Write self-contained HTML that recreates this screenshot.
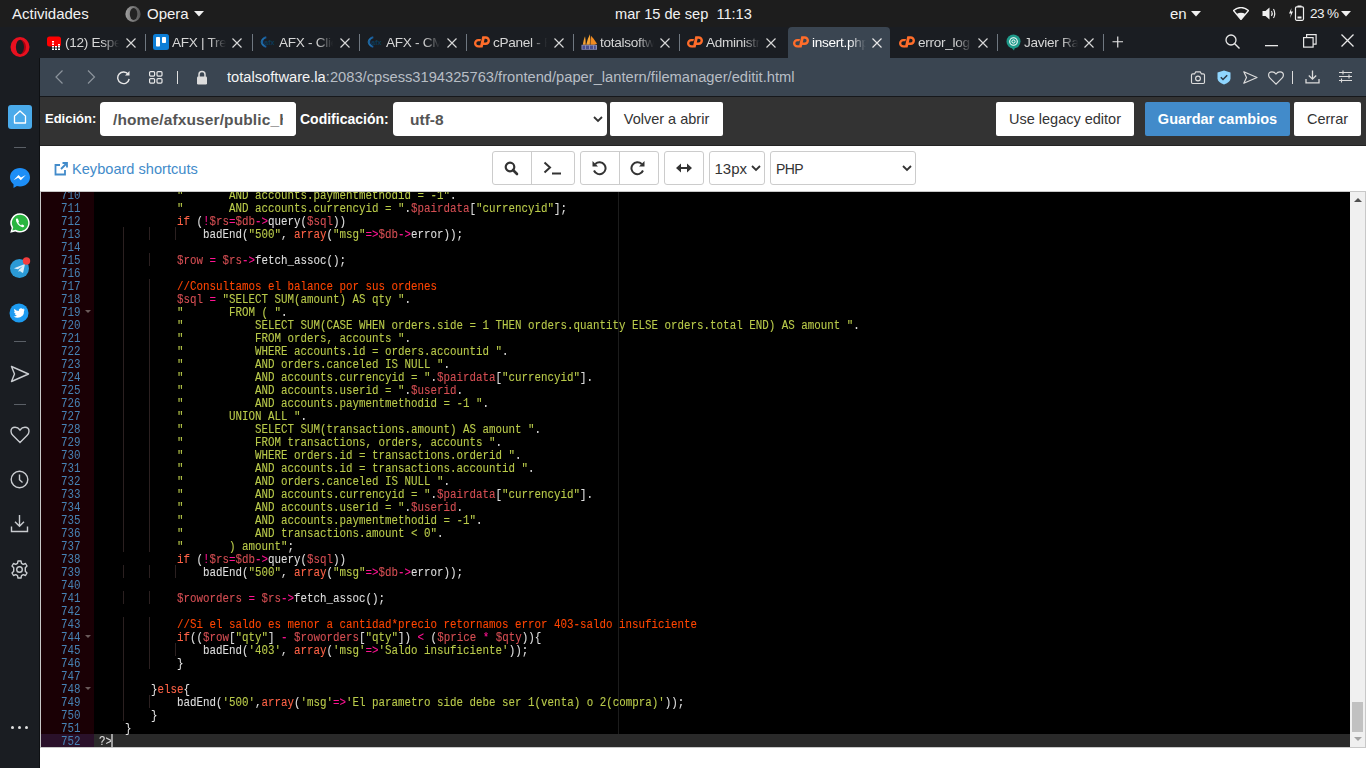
<!DOCTYPE html>
<html><head><meta charset="utf-8">
<style>
*{box-sizing:border-box}
html,body{margin:0;padding:0;width:1366px;height:768px;overflow:hidden;background:#fff;font-family:"Liberation Sans",sans-serif}
.a{position:absolute}
#topbar{position:absolute;left:0;top:0;width:1366px;height:27px;background:#1d1d1d;color:#f0f0f0;font-size:15px}
#tabstrip{position:absolute;left:0;top:27px;width:1366px;height:31px;background:#1a1d22}
#sidebar{position:absolute;left:0;top:58px;width:40px;height:710px;background:#1a1d22;border-right:1px solid #0e1013}
#addr{position:absolute;left:40px;top:58px;width:1326px;height:38px;background:#3a4551}
#addrline{position:absolute;left:40px;top:96px;width:1326px;height:1px;background:#16181b}
#cphead{position:absolute;left:40px;top:97px;width:1326px;height:49px;background:#333;border-bottom:1px solid #232323}
.tab{position:absolute;top:27px;height:31px;color:#d6d6d6;font-size:13.6px;white-space:nowrap}
.tab .ic{position:absolute;left:0;top:8px;width:16px;height:16px}
.tab .tt{position:absolute;left:19px;top:7px;height:20px;line-height:18px;overflow:hidden;letter-spacing:-0.3px;-webkit-mask-image:linear-gradient(90deg,#000 0,#000 70%,transparent 100%)}
.tab .fade{position:absolute;top:6px;height:20px;width:14px}
.tab .x{position:absolute;top:10px;width:11px;height:11px}
.sep{position:absolute;top:34px;width:1px;height:17px;background:#6f7780}
.topt{position:absolute;top:5px;line-height:18px;font-size:15px;color:#f2f2f2;white-space:nowrap}
/* cpanel */
.lbl{position:absolute;top:109px;color:#fff;font-weight:bold;font-size:14.5px;line-height:18px;white-space:nowrap}
.inp{position:absolute;top:102px;height:34px;background:#fff;border-radius:4px}
.btn{position:absolute;height:34px;background:#fff;border-radius:2px;color:#333;font-size:14.5px;line-height:34px;text-align:center;white-space:nowrap}
.tb{position:absolute;top:151px;height:34px;border:1px solid #ccc;background:#fff;border-radius:3px}
/* editor */
#edframe{position:absolute;left:40px;top:191px;width:1326px;height:557px;border:1px solid #c8c8c8;background:#000}
#editor{position:absolute;left:41px;top:192px;width:1324px;height:555px;overflow:hidden;background:#000}
#gutter{position:absolute;left:0;top:0;width:53px;height:555px;background:#1a0005;overflow:hidden}
.gl{position:absolute;left:0;width:53px;height:13px}
.gl span{position:absolute;right:13.7px;top:2px}
.ga{background:#2a112a}
.mono{font-family:"Liberation Mono",monospace;font-size:12px;line-height:13px}
#gutter .gl span{font-family:"Liberation Mono",monospace;font-size:12px;line-height:13px;color:#4682b4;transform:scaleX(0.9028);transform-origin:right top;white-space:pre}
.fold{position:absolute;left:44px;width:0;height:0;border-left:3px solid transparent;border-right:3px solid transparent;border-top:3px solid #6a5a5a}
#pm{position:absolute;left:577px;top:0;width:1px;height:555px;background:#1c1c1c}
#actline{position:absolute;left:53px;width:1256px;height:13px;background:#2a2a2a}
.ig{position:absolute;width:1px;height:13px;background:#2b2020}
#codewrap{position:absolute;left:57.6px;top:2px;width:1300px;height:555px}
#code{position:absolute;left:0;top:0;width:1500px;height:555px;transform:scaleX(0.9028);transform-origin:left top}
.ln{position:absolute;left:0;height:13px;white-space:pre;font-family:"Liberation Mono",monospace;font-size:12px;line-height:13px;color:#dedede}
.ln i{font-style:normal}
.ln{-webkit-text-stroke:0.1px currentColor}
.cm{color:#ff4500}.st{color:#b9ca4a}.va{color:#d54e53}.kw{color:#ff6347}.op{color:#ff1493}
#cursor{position:absolute;left:70px;width:2px;height:13px;background:#9f9f9f}
#vscroll{position:absolute;left:1309px;top:0;width:15px;height:555px;background:#f0f0f0}
#sup{position:absolute;left:3.5px;top:5.5px;width:0;height:0;border-left:4px solid transparent;border-right:4px solid transparent;border-bottom:4.2px solid #505050}
#sdn{position:absolute;left:3.5px;top:545px;width:0;height:0;border-left:4px solid transparent;border-right:4px solid transparent;border-top:4.2px solid #a3a3a3}
#thumb{position:absolute;left:2px;top:510px;width:11px;height:30px;background:#c1c1c1}
</style></head><body>
<div id="topbar">
 <div class="topt" style="left:12px">Actividades</div>
 <svg class="a" style="left:125px;top:6px" width="16" height="16" viewBox="0 0 16 16"><defs><linearGradient id="og" x1="0" x2="1"><stop offset="0" stop-color="#a0a0a0"/><stop offset="1" stop-color="#555"/></linearGradient></defs><ellipse cx="8" cy="8" rx="7.6" ry="7.9" fill="url(#og)"/><ellipse cx="8.6" cy="8" rx="3.8" ry="5.9" fill="#232323"/></svg>
 <div class="topt" style="left:147px">Opera</div>
 <svg class="a" style="left:194px;top:11px" width="10" height="6"><path d="M0 0H10L5 5.5Z" fill="#f0f0f0"/></svg>
 <div class="topt" style="left:615px;font-size:14.6px">mar 15 de sep&nbsp;&nbsp;11:13</div>
 <div class="topt" style="left:1170px">en</div>
 <svg class="a" style="left:1191px;top:11px" width="10" height="6"><path d="M0 0H10L5 5.5Z" fill="#f0f0f0"/></svg>
 <svg class="a" style="left:1233px;top:7px" width="16" height="13" viewBox="0 0 16 13"><path d="M8 12.5L0.5 3.5Q8 -2.5 15.5 3.5Z" fill="none" stroke="#f0f0f0" stroke-width="1.3"/><path d="M8 12.5L3.5 7Q8 4.5 12.5 7Z" fill="#f0f0f0"/></svg>
 <svg class="a" style="left:1262px;top:7px" width="15" height="13" viewBox="0 0 15 13"><path d="M0.5 4H3.5L7.5 0.5V12.5L3.5 9H0.5Z" fill="#f0f0f0"/><path d="M9.5 4Q11 6.5 9.5 9M11.5 2Q14 6.5 11.5 11" fill="none" stroke="#f0f0f0" stroke-width="1.1"/></svg>
 <svg class="a" style="left:1288px;top:5px" width="18" height="16" viewBox="0 0 18 16"><path d="M3.5 3L1 8.5H3L2 13L5 6.5H3Z" fill="#f0f0f0"/><rect x="7.5" y="1.8" width="8" height="13.5" rx="1.2" fill="none" stroke="#f0f0f0" stroke-width="1.2"/><rect x="9.5" y="0.5" width="4" height="1.5" fill="#f0f0f0"/><rect x="9.5" y="11.5" width="4" height="2" fill="#f0f0f0"/></svg>
 <div class="topt" style="left:1310px;font-size:13.5px;letter-spacing:-0.6px">23 %</div>
 <svg class="a" style="left:1341px;top:11px" width="10" height="6"><path d="M0 0H10L5 5.5Z" fill="#f0f0f0"/></svg>
</div>
<div id="tabstrip"></div>
<div id="sidebar"></div>
<div id="addr"></div>
<div id="addrline"></div>
<div id="cphead"></div>

<!-- opera logo -->
<svg class="a" style="left:10px;top:37px" width="20" height="20" viewBox="0 0 20 20"><ellipse cx="10" cy="10" rx="9.5" ry="10" fill="#e8101f"/><ellipse cx="10.3" cy="10" rx="4.4" ry="7.3" fill="#1a1d22"/><path d="M10.3 2.7Q16 4 16 10Q16 16 10.3 17.3Q14 15 14 10Q14 5 10.3 2.7Z" fill="#a8000f"/></svg>
<!-- tab 1 youtube -->
<svg class="a" style="left:47px;top:36px" width="16" height="16" viewBox="0 0 16 16"><rect x="0" y="0.5" width="14" height="10" rx="2.5" fill="#ff0000"/><g fill="#fff"><rect x="5" y="5" width="2" height="1.5"/><rect x="5" y="7.5" width="2" height="1.5"/><rect x="5" y="10" width="2" height="1.5"/><rect x="5" y="12.5" width="2" height="1.5"/><rect x="8" y="10" width="2" height="1.5"/><rect x="8" y="12.5" width="2" height="1.5"/><rect x="11" y="8" width="2" height="1.5"/><rect x="11" y="10" width="2" height="1.5"/><rect x="11" y="12.5" width="2" height="1.5"/></g></svg>
<div class="tab" style="left:65px"><div class="tt" style="left:0;width:54px">(12) Espe</div></div>
<svg class="a" style="left:126px;top:38px" width="10" height="10"><path d="M0.5 0.5L9.5 9.5M9.5 0.5L0.5 9.5" stroke="#d8d8d8" stroke-width="1.15"/></svg>
<div class="sep" style="left:145px"></div>
<!-- tab 2 trello -->
<svg class="a" style="left:153px;top:34px" width="16" height="16" viewBox="0 0 16 16"><rect x="0" y="0" width="16" height="16" rx="2.5" fill="#0c7ed6"/><rect x="3" y="3" width="4" height="9.5" rx="0.8" fill="#fff"/><rect x="9" y="3" width="4" height="6" rx="0.8" fill="#fff"/></svg>
<div class="tab" style="left:172px"><div class="tt" style="left:0;width:54px">AFX | Trello</div></div>
<svg class="a" style="left:232px;top:38px" width="10" height="10"><path d="M0.5 0.5L9.5 9.5M9.5 0.5L0.5 9.5" stroke="#d8d8d8" stroke-width="1.15"/></svg>
<div class="sep" style="left:252px"></div>
<!-- tab 3 -->
<svg class="a" style="left:260px;top:36px" width="17" height="12" viewBox="0 0 17 12"><path d="M6.3 1.2A5.2 4.9 0 0 0 6.3 10.8" fill="none" stroke="#1a5e9e" stroke-width="1.9"/><path d="M4.6 2.6A3.6 3.4 0 0 0 4.6 9.4" fill="none" stroke="#2a8ac0" stroke-width="0.8" opacity="0.7"/><text x="4.2" y="8.6" font-size="7.2" font-weight="bold" fill="#0b3a58" font-family="Liberation Sans">afx</text></svg>
<div class="tab" style="left:279px"><div class="tt" style="left:0;width:54px">AFX - Clientes</div></div>
<svg class="a" style="left:340px;top:38px" width="10" height="10"><path d="M0.5 0.5L9.5 9.5M9.5 0.5L0.5 9.5" stroke="#d8d8d8" stroke-width="1.15"/></svg>
<div class="sep" style="left:359px"></div>
<!-- tab 4 -->
<svg class="a" style="left:367px;top:36px" width="17" height="12" viewBox="0 0 17 12"><path d="M6.3 1.2A5.2 4.9 0 0 0 6.3 10.8" fill="none" stroke="#1a5e9e" stroke-width="1.9"/><path d="M4.6 2.6A3.6 3.4 0 0 0 4.6 9.4" fill="none" stroke="#2a8ac0" stroke-width="0.8" opacity="0.7"/><text x="4.2" y="8.6" font-size="7.2" font-weight="bold" fill="#0b3a58" font-family="Liberation Sans">afx</text></svg>
<div class="tab" style="left:386px"><div class="tt" style="left:0;width:54px">AFX - CMS</div></div>
<svg class="a" style="left:447px;top:38px" width="10" height="10"><path d="M0.5 0.5L9.5 9.5M9.5 0.5L0.5 9.5" stroke="#d8d8d8" stroke-width="1.15"/></svg>
<div class="sep" style="left:466px"></div>
<!-- tab 5 cpanel -->
<svg class="a" style="left:474px;top:36px" width="16" height="12" viewBox="0 0 16 12"><g fill="#ff6d2a"><path d="M7 3H4.3A4.3 4.3 0 0 0 4.3 11.6H6L6.6 9.3H4.3A2 2 0 0 1 4.3 5.3H6.4Z"/><path fill-rule="evenodd" d="M8.3 0.3H11.7A4.3 4.3 0 0 1 11.7 8.9H9.2L8.6 11.6H5.7Z M10.65 2.7H11.7A1.9 1.9 0 0 1 11.7 6.5H9.77Z"/></g></svg>
<div class="tab" style="left:493px"><div class="tt" style="left:0;width:54px">cPanel - File</div></div>
<svg class="a" style="left:554px;top:38px" width="10" height="10"><path d="M0.5 0.5L9.5 9.5M9.5 0.5L0.5 9.5" stroke="#d8d8d8" stroke-width="1.15"/></svg>
<div class="sep" style="left:573px"></div>
<!-- tab 6 totalsoft -->
<svg class="a" style="left:581px;top:34px" width="17" height="16" viewBox="0 0 17 16"><path d="M1.8 10.8Q2.6 5.5 4 2.3Q4.8 6 4.7 10.8Z" fill="#f5a030"/><path d="M5.2 10.8Q6.8 4 9 0.3Q9.3 5 8.8 10.8Z" fill="#f7a535"/><path d="M9.4 10.8Q9.4 5 10 1.8Q13.2 5 16 9.8L13.5 10.8Z" fill="#f08a20"/><rect x="0.5" y="10.8" width="15.5" height="5" fill="#8a8db4"/><g fill="#4a4f8e"><rect x="1.5" y="11.6" width="2.6" height="3.6"/><rect x="5" y="11.6" width="3" height="3.6"/><rect x="9" y="11.6" width="3" height="3.6"/><rect x="13" y="11.6" width="1.8" height="3.6"/></g></svg>
<div class="tab" style="left:600px"><div class="tt" style="left:0;width:54px">totalsoftware</div></div>
<svg class="a" style="left:660px;top:38px" width="10" height="10"><path d="M0.5 0.5L9.5 9.5M9.5 0.5L0.5 9.5" stroke="#d8d8d8" stroke-width="1.15"/></svg>
<div class="sep" style="left:679px"></div>
<!-- tab 7 cpanel admin -->
<svg class="a" style="left:687px;top:36px" width="16" height="12" viewBox="0 0 16 12"><g fill="#ff6d2a"><path d="M7 3H4.3A4.3 4.3 0 0 0 4.3 11.6H6L6.6 9.3H4.3A2 2 0 0 1 4.3 5.3H6.4Z"/><path fill-rule="evenodd" d="M8.3 0.3H11.7A4.3 4.3 0 0 1 11.7 8.9H9.2L8.6 11.6H5.7Z M10.65 2.7H11.7A1.9 1.9 0 0 1 11.7 6.5H9.77Z"/></g></svg>
<div class="tab" style="left:706px"><div class="tt" style="left:0;width:54px">Administrador</div></div>
<svg class="a" style="left:766px;top:38px" width="10" height="10"><path d="M0.5 0.5L9.5 9.5M9.5 0.5L0.5 9.5" stroke="#d8d8d8" stroke-width="1.15"/></svg>
<!-- active tab -->
<div class="a" style="left:788px;top:27px;width:102px;height:31px;background:#3a4551;border-radius:4px 4px 0 0"></div>
<svg class="a" style="left:793px;top:36px" width="16" height="12" viewBox="0 0 16 12"><g fill="#ff6d2a"><path d="M7 3H4.3A4.3 4.3 0 0 0 4.3 11.6H6L6.6 9.3H4.3A2 2 0 0 1 4.3 5.3H6.4Z"/><path fill-rule="evenodd" d="M8.3 0.3H11.7A4.3 4.3 0 0 1 11.7 8.9H9.2L8.6 11.6H5.7Z M10.65 2.7H11.7A1.9 1.9 0 0 1 11.7 6.5H9.77Z"/></g></svg>
<div class="tab" style="left:812px;color:#fff"><div class="tt" style="left:0;width:54px">insert.php</div></div>
<svg class="a" style="left:872px;top:38px" width="10" height="10"><path d="M0.5 0.5L9.5 9.5M9.5 0.5L0.5 9.5" stroke="#e8e8e8" stroke-width="1.15"/></svg>
<!-- tab error_log -->
<svg class="a" style="left:899px;top:36px" width="16" height="12" viewBox="0 0 16 12"><g fill="#ff6d2a"><path d="M7 3H4.3A4.3 4.3 0 0 0 4.3 11.6H6L6.6 9.3H4.3A2 2 0 0 1 4.3 5.3H6.4Z"/><path fill-rule="evenodd" d="M8.3 0.3H11.7A4.3 4.3 0 0 1 11.7 8.9H9.2L8.6 11.6H5.7Z M10.65 2.7H11.7A1.9 1.9 0 0 1 11.7 6.5H9.77Z"/></g></svg>
<div class="tab" style="left:918px"><div class="tt" style="left:0;width:54px">error_log</div></div>
<svg class="a" style="left:978px;top:38px" width="10" height="10"><path d="M0.5 0.5L9.5 9.5M9.5 0.5L0.5 9.5" stroke="#d8d8d8" stroke-width="1.15"/></svg>
<div class="sep" style="left:997px"></div>
<!-- javier -->
<svg class="a" style="left:1006px;top:34px" width="15" height="17" viewBox="0 0 15 17"><circle cx="7.5" cy="7.5" r="7" fill="#1e9a8a"/><path d="M5 13L8 16.5L9 13Z" fill="#1e9a8a"/><circle cx="7.5" cy="7.5" r="3.8" fill="none" stroke="#fff" stroke-width="1.1"/><circle cx="7.5" cy="7.5" r="1.6" fill="none" stroke="#fff" stroke-width="1"/></svg>
<div class="tab" style="left:1024px"><div class="tt" style="left:0;width:54px">Javier Ramirez</div></div>
<svg class="a" style="left:1084px;top:38px" width="10" height="10"><path d="M0.5 0.5L9.5 9.5M9.5 0.5L0.5 9.5" stroke="#d8d8d8" stroke-width="1.15"/></svg>
<div class="sep" style="left:1103px"></div>
<svg class="a" style="left:1112px;top:36px" width="12" height="12"><path d="M5.75 0.5V11.5M0.5 5.75H11" stroke="#e8e8e8" stroke-width="1.15"/></svg>
<!-- right window controls -->
<svg class="a" style="left:1225px;top:34px" width="16" height="15" viewBox="0 0 16 15"><circle cx="6" cy="6" r="5" fill="none" stroke="#e8e8e8" stroke-width="1.3"/><path d="M9.5 9.5L14.5 14.5" stroke="#e8e8e8" stroke-width="1.4"/></svg>
<svg class="a" style="left:1265px;top:45px" width="13" height="2"><rect x="0" y="0" width="13" height="1.3" fill="#e8e8e8"/></svg>
<svg class="a" style="left:1303px;top:34px" width="14" height="14" viewBox="0 0 14 14"><rect x="0.6" y="3.6" width="9.5" height="9.5" fill="none" stroke="#e8e8e8" stroke-width="1.2"/><path d="M3.6 3.6V0.6H13.1V10.1H10.1" fill="none" stroke="#e8e8e8" stroke-width="1.2"/></svg>
<svg class="a" style="left:1341px;top:34px" width="13" height="13"><path d="M0.5 0.5L12.5 12.5M12.5 0.5L0.5 12.5" stroke="#e8e8e8" stroke-width="1.3"/></svg>
<!-- address bar -->
<svg class="a" style="left:55px;top:70px" width="9" height="14"><path d="M7.5 0.5L1 7L7.5 13.5" fill="none" stroke="#8c949c" stroke-width="1.2"/></svg>
<svg class="a" style="left:87px;top:70px" width="9" height="14"><path d="M1 0.5L7.5 7L1 13.5" fill="none" stroke="#8c949c" stroke-width="1.2"/></svg>
<svg class="a" style="left:116px;top:70px" width="15" height="15" viewBox="0 0 15 15"><path d="M12.3 4.5A5.8 5.8 0 1 0 13.2 9" fill="none" stroke="#e8e8e8" stroke-width="1.4"/><path d="M13.5 1V5.5H9Z" fill="#e8e8e8"/></svg>
<svg class="a" style="left:149px;top:71px" width="14" height="13" viewBox="0 0 14 13"><g fill="none" stroke="#e8e8e8" stroke-width="1.2"><rect x="0.6" y="0.6" width="5" height="4.5" rx="1"/><rect x="8" y="0.6" width="5" height="4.5" rx="1"/><rect x="0.6" y="7.6" width="5" height="4.5" rx="1"/><rect x="8" y="7.6" width="5" height="4.5" rx="1"/></g></svg>
<div class="a" style="left:177px;top:71px;width:1px;height:13px;background:#e0e0e0"></div>
<svg class="a" style="left:196px;top:70px" width="12" height="15" viewBox="0 0 12 15"><path d="M3 7V4.5A3 3 0 0 1 9 4.5V7" fill="none" stroke="#dcdcdc" stroke-width="1.5"/><rect x="1" y="6.5" width="10" height="8" rx="1.3" fill="#dcdcdc"/></svg>
<div class="a" style="left:227px;top:67px;font-size:14.7px;line-height:20px;color:#f4f4f4;white-space:nowrap">totalsoftware.la<span style="color:#b8bec5">:2083/cpsess3194325763/frontend/paper_lantern/filemanager/editit.html</span></div>
<svg class="a" style="left:1190px;top:70px" width="16" height="15" viewBox="0 0 16 15"><path d="M1.5 5Q1.5 3.8 2.7 3.8H4.6L5.8 1.8H10.2L11.4 3.8H13.3Q14.5 3.8 14.5 5V12.3Q14.5 13.5 13.3 13.5H2.7Q1.5 13.5 1.5 12.3Z" fill="none" stroke="#dcdcdc" stroke-width="1.15"/><circle cx="8" cy="8.5" r="2.4" fill="none" stroke="#dcdcdc" stroke-width="1.15"/></svg>
<svg class="a" style="left:1217px;top:70px" width="14" height="15" viewBox="0 0 14 15"><path d="M7 0.5L13.5 2.5V8.5Q13.5 12 7 14.5Q0.5 12 0.5 8.5V2.5Z" fill="#8fd6ff"/><path d="M3.8 7.3L6 9.5L10.2 5.3" fill="none" stroke="#2c3a48" stroke-width="1.5"/></svg>
<svg class="a" style="left:1243px;top:71px" width="15" height="13" viewBox="0 0 15 13"><path d="M0.8 0.8L14 6.5L0.8 12.2L3.5 6.5Z" fill="none" stroke="#dcdcdc" stroke-width="1.2" stroke-linejoin="round"/></svg>
<svg class="a" style="left:1268px;top:71px" width="16" height="14" viewBox="0 0 16 14"><path d="M8 13.2L2 7.2Q0.6 5.8 0.6 4Q0.6 0.8 4 0.8Q6.5 0.8 8 3Q9.5 0.8 12 0.8Q15.4 0.8 15.4 4Q15.4 5.8 14 7.2Z" fill="none" stroke="#dcdcdc" stroke-width="1.2"/></svg>
<div class="a" style="left:1292px;top:71px;width:1px;height:13px;background:#dcdcdc"></div>
<svg class="a" style="left:1305px;top:70px" width="15" height="14" viewBox="0 0 15 14"><path d="M7.5 0.5V9M3.8 5.5L7.5 9.2L11.2 5.5" fill="none" stroke="#dcdcdc" stroke-width="1.3"/><path d="M1 9V12.8H14V9" fill="none" stroke="#dcdcdc" stroke-width="1.3"/></svg>
<svg class="a" style="left:1339px;top:70px" width="13" height="15" viewBox="0 0 13 15"><g stroke="#dcdcdc" stroke-width="1.1"><path d="M0 2.5H13M0 6.5H13M0 10.5H13"/><path d="M4 0.5V4.5M10 4.5V8.5M2.5 8.5V12.5"/></g></svg>


<!-- cpanel header -->
<div class="lbl" style="left:45px;top:110px;font-size:13px">Edición:</div>
<div class="inp" style="left:100px;width:196px;overflow:hidden"><div class="a" style="left:13px;top:9px;font-weight:bold;font-size:15.5px;letter-spacing:0.12px;line-height:18px;color:#555;white-space:nowrap">/home/afxuser/public_html/insert.php</div><div class="a" style="left:183px;top:0;width:13px;height:34px;background:#fff"></div></div>
<div class="lbl" style="left:300px;top:110px;font-size:14px">Codificación:</div>
<div class="inp" style="left:393px;width:214px"><div class="a" style="left:17px;top:9px;font-weight:bold;font-size:15.5px;line-height:18px;color:#555">utf-8</div>
<svg class="a" style="left:200px;top:14px" width="10" height="7"><path d="M1 1L5 5L9 1" fill="none" stroke="#333" stroke-width="1.8"/></svg></div>
<div class="btn" style="left:610px;top:102px;width:113px">Volver a abrir</div>
<div class="btn" style="left:996px;top:102px;width:138px">Use legacy editor</div>
<div class="btn" style="left:1145px;top:102px;width:145px;background:#428bca;color:#fff;font-weight:bold">Guardar cambios</div>
<div class="btn" style="left:1294px;top:102px;width:67px">Cerrar</div>
<!-- toolbar -->
<svg class="a" style="left:54px;top:162px" width="14" height="14" viewBox="0 0 14 14"><path d="M11 8V12.5H1.5V3H6" fill="none" stroke="#428bca" stroke-width="1.8"/><path d="M7 7L12.5 1.5M8.5 1H13V5.5" fill="none" stroke="#428bca" stroke-width="1.8"/></svg>
<div class="a" style="left:72px;top:160px;font-size:14.6px;line-height:18px;color:#428bca;white-space:nowrap">Keyboard shortcuts</div>
<div class="tb" style="left:492px;width:83px"><div class="a" style="left:38px;top:0;width:1px;height:32px;background:#ccc"></div></div>
<div class="tb" style="left:580px;width:79px"><div class="a" style="left:38px;top:0;width:1px;height:32px;background:#ccc"></div></div>
<div class="tb" style="left:664px;width:40px"></div>
<div class="tb" style="left:709px;width:56px"><div class="a" style="left:4.5px;top:8px;font-size:15px;line-height:18px;color:#333">13px</div><svg class="a" style="left:41px;top:13px" width="10" height="7"><path d="M1 1L5 5L9 1" fill="none" stroke="#333" stroke-width="1.8"/></svg></div>
<div class="tb" style="left:770px;width:146px"><div class="a" style="left:5px;top:8px;font-size:14px;letter-spacing:-0.6px;line-height:18px;color:#333">PHP</div><svg class="a" style="left:130.5px;top:13px" width="10" height="7"><path d="M1 1L5 5L9 1" fill="none" stroke="#333" stroke-width="1.8"/></svg></div>
<svg class="a" style="left:504px;top:161px" width="15" height="15" viewBox="0 0 15 15"><circle cx="6" cy="6" r="4.3" fill="none" stroke="#333" stroke-width="2.2"/><path d="M9 9L13 13" stroke="#333" stroke-width="2.6" stroke-linecap="round"/></svg>
<svg class="a" style="left:543px;top:161px" width="19" height="14" viewBox="0 0 19 14"><path d="M1.5 1.5L7 6.5L1.5 11.5" fill="none" stroke="#333" stroke-width="2"/><path d="M9 12.5H18" stroke="#333" stroke-width="2"/></svg>
<svg class="a" style="left:591px;top:160px" width="16" height="16" viewBox="0 0 16 16"><path d="M4.3 4A6 6 0 1 1 3 10.5" fill="none" stroke="#333" stroke-width="2"/><path d="M1.5 1V6.5H7Z" fill="#333"/></svg>
<svg class="a" style="left:630px;top:160px" width="16" height="16" viewBox="0 0 16 16"><path d="M11.7 4A6 6 0 1 0 13 10.5" fill="none" stroke="#333" stroke-width="2"/><path d="M14.5 1V6.5H9Z" fill="#333"/></svg>
<svg class="a" style="left:676px;top:163px" width="16" height="10" viewBox="0 0 16 10"><path d="M3 5H13" stroke="#333" stroke-width="2"/><path d="M0 5L5 0.5V9.5Z M16 5L11 0.5V9.5Z" fill="#333"/></svg>
<!-- sidebar icons -->
<div class="a" style="left:8px;top:105px;width:24px;height:24px;border-radius:3px;background:#4aaaea"></div>
<svg class="a" style="left:8px;top:105px" width="24" height="24" viewBox="0 0 24 24"><path d="M6.5 11L12 6L17.5 11V18H6.5Z" fill="none" stroke="#fff" stroke-width="1.3" stroke-linejoin="round"/></svg>
<div class="a" style="left:14px;top:147px;width:12px;height:1px;background:#5a5f66"></div>
<svg class="a" style="left:9px;top:167px" width="22" height="22" viewBox="0 0 22 22"><path d="M11 1C5.3 1 1 5 1 10.3C1 13.2 2.3 15.6 4.5 17.3V21L7.9 19.1C8.9 19.4 9.9 19.5 11 19.5C16.7 19.5 21 15.5 21 10.3C21 5 16.7 1 11 1Z" fill="#1d8ef7"/><path d="M4.5 13.3L9.5 8L12 10.6L16.8 8L11.8 13.3L9.2 10.7Z" fill="#fff"/></svg>
<svg class="a" style="left:9px;top:212px" width="22" height="22" viewBox="0 0 22 22"><path d="M11 1.2A9.7 9.7 0 0 0 2.7 15.9L1.2 20.8L6.3 19.4A9.7 9.7 0 1 0 11 1.2Z" fill="#fff"/><path d="M11 2.8A8.1 8.1 0 0 0 4.2 15.3L3.4 18.6L6.7 17.7A8.1 8.1 0 1 0 11 2.8Z" fill="#2ab540"/><path d="M7.8 6.5Q7 6.6 6.9 7.8Q6.8 9.5 8.8 12.2Q11 14.8 13.5 15.3Q14.7 15.4 15.2 14.2Q15.3 13.5 14.8 13.2L13.3 12.5Q12.9 12.4 12.6 12.8L12.1 13.4Q10.3 12.6 9.3 10.8L9.8 10.1Q10 9.8 9.9 9.5L9.2 7.6Q9 6.9 8.5 6.6Z" fill="#fff"/></svg>
<svg class="a" style="left:9px;top:257px" width="22" height="22" viewBox="0 0 22 22"><circle cx="10.5" cy="11.5" r="9.5" fill="#2b9ad6"/><path d="M5 11.3L15.3 7.3Q16 7.1 15.8 8L14.2 15.4Q14 16.1 13.3 15.7L10.8 13.9L9.5 15.1L9.7 12.9L13.8 9.2L8.8 12.3L6.5 11.7Q5.6 11.5 5 11.3Z" fill="#d8ecf8"/><circle cx="17.5" cy="4" r="3.7" fill="#f43d3d"/></svg>
<svg class="a" style="left:9px;top:302px" width="22" height="22" viewBox="0 0 22 22"><circle cx="10" cy="11" r="9.5" fill="#1d9bf0"/><path d="M15.5 7.3Q14.8 7.6 14.2 7.7Q14.9 7.2 15.1 6.5Q14.4 6.9 13.7 7A2.3 2.3 0 0 0 9.8 9.1Q7.1 9 5.3 6.8Q4.6 8.3 6 9.8Q5.5 9.8 5 9.5Q5 11.3 6.8 11.8Q6.3 12 5.8 11.9Q6.3 13.3 7.9 13.5Q6.3 14.7 4.5 14.5Q9.5 17.3 13.5 13.8Q15.2 11.9 15 9.1Q15.4 8.7 15.5 7.3Z" fill="#fff"/></svg>
<div class="a" style="left:14px;top:341px;width:12px;height:1px;background:#5a5f66"></div>
<svg class="a" style="left:10px;top:365px" width="20" height="18" viewBox="0 0 20 18"><path d="M1.5 1.5L18.5 9L1.5 16.5L4.5 9Z" fill="none" stroke="#c9ccd0" stroke-width="1.4" stroke-linejoin="round"/></svg>
<div class="a" style="left:14px;top:404px;width:12px;height:1px;background:#5a5f66"></div>
<svg class="a" style="left:10px;top:426px" width="20" height="18" viewBox="0 0 20 18"><path d="M10 16.5L3 9.5Q1 7.5 1 5.2Q1 1.3 5 1.3Q8 1.3 10 4Q12 1.3 15 1.3Q19 1.3 19 5.2Q19 7.5 17 9.5Z" fill="none" stroke="#c9ccd0" stroke-width="1.4"/></svg>
<svg class="a" style="left:10px;top:470px" width="19" height="19" viewBox="0 0 19 19"><circle cx="9.5" cy="9.5" r="8.3" fill="none" stroke="#c9ccd0" stroke-width="1.4"/><path d="M9.5 4.5V9.8L12.5 12.5" fill="none" stroke="#c9ccd0" stroke-width="1.4"/></svg>
<svg class="a" style="left:10px;top:514px" width="19" height="19" viewBox="0 0 19 19"><path d="M9.5 1V12M5 7.8L9.5 12.3L14 7.8" fill="none" stroke="#c9ccd0" stroke-width="1.4"/><path d="M1.5 12.5V17.5H17.5V12.5" fill="none" stroke="#c9ccd0" stroke-width="1.4"/></svg>
<svg class="a" style="left:10px;top:560px" width="19" height="19" viewBox="0 0 19 19"><path d="M8 1H11L11.5 3.3L13.3 4.3L15.5 3.5L17 6L15.3 7.7V9.5V11.3L17 13L15.5 15.5L13.3 14.7L11.5 15.7L11 18H8L7.5 15.7L5.7 14.7L3.5 15.5L2 13L3.7 11.3V7.7L2 6L3.5 3.5L5.7 4.3L7.5 3.3Z" fill="none" stroke="#c9ccd0" stroke-width="1.4" stroke-linejoin="round"/><circle cx="9.5" cy="9.5" r="2.8" fill="none" stroke="#c9ccd0" stroke-width="1.4"/></svg>
<div class="a" style="left:11px;top:726px;width:3px;height:3px;border-radius:2px;background:#e0e0e0"></div>
<div class="a" style="left:18px;top:726px;width:3px;height:3px;border-radius:2px;background:#e0e0e0"></div>
<div class="a" style="left:25px;top:726px;width:3px;height:3px;border-radius:2px;background:#e0e0e0"></div>

<div id="edframe"></div>
<div id="editor">
 <div id="gutter"><div class="gl" style="top:-4px"><span>710</span></div><div class="gl" style="top:9px"><span>711</span></div><div class="gl" style="top:22px"><span>712</span></div><div class="gl" style="top:35px"><span>713</span></div><div class="gl" style="top:48px"><span>714</span></div><div class="gl" style="top:61px"><span>715</span></div><div class="gl" style="top:74px"><span>716</span></div><div class="gl" style="top:87px"><span>717</span></div><div class="gl" style="top:100px"><span>718</span></div><div class="gl" style="top:113px"><span>719</span></div><div class="gl" style="top:126px"><span>720</span></div><div class="gl" style="top:139px"><span>721</span></div><div class="gl" style="top:152px"><span>722</span></div><div class="gl" style="top:165px"><span>723</span></div><div class="gl" style="top:178px"><span>724</span></div><div class="gl" style="top:191px"><span>725</span></div><div class="gl" style="top:204px"><span>726</span></div><div class="gl" style="top:217px"><span>727</span></div><div class="gl" style="top:230px"><span>728</span></div><div class="gl" style="top:243px"><span>729</span></div><div class="gl" style="top:256px"><span>730</span></div><div class="gl" style="top:269px"><span>731</span></div><div class="gl" style="top:282px"><span>732</span></div><div class="gl" style="top:295px"><span>733</span></div><div class="gl" style="top:308px"><span>734</span></div><div class="gl" style="top:321px"><span>735</span></div><div class="gl" style="top:334px"><span>736</span></div><div class="gl" style="top:347px"><span>737</span></div><div class="gl" style="top:360px"><span>738</span></div><div class="gl" style="top:373px"><span>739</span></div><div class="gl" style="top:386px"><span>740</span></div><div class="gl" style="top:399px"><span>741</span></div><div class="gl" style="top:412px"><span>742</span></div><div class="gl" style="top:425px"><span>743</span></div><div class="gl" style="top:438px"><span>744</span></div><div class="gl" style="top:451px"><span>745</span></div><div class="gl" style="top:464px"><span>746</span></div><div class="gl" style="top:477px"><span>747</span></div><div class="gl" style="top:490px"><span>748</span></div><div class="gl" style="top:503px"><span>749</span></div><div class="gl" style="top:516px"><span>750</span></div><div class="gl" style="top:529px"><span>751</span></div><div class="gl ga" style="top:542px"><span>752</span></div><div class="fold" style="top:118px"></div><div class="fold" style="top:443px"></div><div class="fold" style="top:495px"></div></div>
 <div id="pm"></div>
 <div id="actline" style="top:542px"></div>
 <div class="ig" style="left:82.0px;top:35px"></div><div class="ig" style="left:108.0px;top:35px"></div><div class="ig" style="left:134.0px;top:35px"></div><div class="ig" style="left:82.0px;top:48px"></div><div class="ig" style="left:82.0px;top:61px"></div><div class="ig" style="left:108.0px;top:61px"></div><div class="ig" style="left:82.0px;top:74px"></div><div class="ig" style="left:82.0px;top:87px"></div><div class="ig" style="left:108.0px;top:87px"></div><div class="ig" style="left:82.0px;top:100px"></div><div class="ig" style="left:108.0px;top:100px"></div><div class="ig" style="left:82.0px;top:113px"></div><div class="ig" style="left:108.0px;top:113px"></div><div class="ig" style="left:82.0px;top:126px"></div><div class="ig" style="left:108.0px;top:126px"></div><div class="ig" style="left:82.0px;top:139px"></div><div class="ig" style="left:108.0px;top:139px"></div><div class="ig" style="left:82.0px;top:152px"></div><div class="ig" style="left:108.0px;top:152px"></div><div class="ig" style="left:82.0px;top:165px"></div><div class="ig" style="left:108.0px;top:165px"></div><div class="ig" style="left:82.0px;top:178px"></div><div class="ig" style="left:108.0px;top:178px"></div><div class="ig" style="left:82.0px;top:191px"></div><div class="ig" style="left:108.0px;top:191px"></div><div class="ig" style="left:82.0px;top:204px"></div><div class="ig" style="left:108.0px;top:204px"></div><div class="ig" style="left:82.0px;top:217px"></div><div class="ig" style="left:108.0px;top:217px"></div><div class="ig" style="left:82.0px;top:230px"></div><div class="ig" style="left:108.0px;top:230px"></div><div class="ig" style="left:82.0px;top:243px"></div><div class="ig" style="left:108.0px;top:243px"></div><div class="ig" style="left:82.0px;top:256px"></div><div class="ig" style="left:108.0px;top:256px"></div><div class="ig" style="left:82.0px;top:269px"></div><div class="ig" style="left:108.0px;top:269px"></div><div class="ig" style="left:82.0px;top:282px"></div><div class="ig" style="left:108.0px;top:282px"></div><div class="ig" style="left:82.0px;top:295px"></div><div class="ig" style="left:108.0px;top:295px"></div><div class="ig" style="left:82.0px;top:308px"></div><div class="ig" style="left:108.0px;top:308px"></div><div class="ig" style="left:82.0px;top:321px"></div><div class="ig" style="left:108.0px;top:321px"></div><div class="ig" style="left:82.0px;top:334px"></div><div class="ig" style="left:108.0px;top:334px"></div><div class="ig" style="left:82.0px;top:347px"></div><div class="ig" style="left:108.0px;top:347px"></div><div class="ig" style="left:82.0px;top:373px"></div><div class="ig" style="left:108.0px;top:373px"></div><div class="ig" style="left:134.0px;top:373px"></div><div class="ig" style="left:82.0px;top:399px"></div><div class="ig" style="left:108.0px;top:399px"></div><div class="ig" style="left:82.0px;top:425px"></div><div class="ig" style="left:108.0px;top:425px"></div><div class="ig" style="left:82.0px;top:438px"></div><div class="ig" style="left:108.0px;top:438px"></div><div class="ig" style="left:82.0px;top:451px"></div><div class="ig" style="left:108.0px;top:451px"></div><div class="ig" style="left:134.0px;top:451px"></div><div class="ig" style="left:82.0px;top:464px"></div><div class="ig" style="left:108.0px;top:464px"></div><div class="ig" style="left:82.0px;top:477px"></div><div class="ig" style="left:82.0px;top:490px"></div><div class="ig" style="left:82.0px;top:503px"></div><div class="ig" style="left:108.0px;top:503px"></div><div class="ig" style="left:82.0px;top:516px"></div>
 <div id="codewrap"><div id="code"><div class="ln" style="top:-4px">            <i class="st">&quot;       AND accounts.paymentmethodid = -1&quot;</i>.</div><div class="ln" style="top:9px">            <i class="st">&quot;       AND accounts.currencyid = &quot;</i>.<i class="va">$pairdata</i>[<i class="st">&quot;currencyid&quot;</i>];</div><div class="ln" style="top:22px">            <i class="kw">if</i> (<i class="op">!</i><i class="va">$rs</i><i class="op">=</i><i class="va">$db</i><i class="op">-&gt;</i>query(<i class="va">$sql</i>))</div><div class="ln" style="top:35px">                badEnd(<i class="st">&quot;500&quot;</i>, <i class="kw">array</i>(<i class="st">&quot;msg&quot;</i><i class="op">=&gt;</i><i class="va">$db</i><i class="op">-&gt;</i>error));</div><div class="ln" style="top:48px"></div><div class="ln" style="top:61px">            <i class="va">$row</i> <i class="op">=</i> <i class="va">$rs</i><i class="op">-&gt;</i>fetch_assoc();</div><div class="ln" style="top:74px"></div><div class="ln" style="top:87px">            <i class="cm">//Consultamos el balance por sus ordenes</i></div><div class="ln" style="top:100px">            <i class="va">$sql</i> <i class="op">=</i> <i class="st">&quot;SELECT SUM(amount) AS qty &quot;</i>.</div><div class="ln" style="top:113px">            <i class="st">&quot;       FROM ( &quot;</i>.</div><div class="ln" style="top:126px">            <i class="st">&quot;           SELECT SUM(CASE WHEN orders.side = 1 THEN orders.quantity ELSE orders.total END) AS amount &quot;</i>.</div><div class="ln" style="top:139px">            <i class="st">&quot;           FROM orders, accounts &quot;</i>.</div><div class="ln" style="top:152px">            <i class="st">&quot;           WHERE accounts.id = orders.accountid &quot;</i>.</div><div class="ln" style="top:165px">            <i class="st">&quot;           AND orders.canceled IS NULL &quot;</i>.</div><div class="ln" style="top:178px">            <i class="st">&quot;           AND accounts.currencyid = &quot;</i>.<i class="va">$pairdata</i>[<i class="st">&quot;currencyid&quot;</i>].</div><div class="ln" style="top:191px">            <i class="st">&quot;           AND accounts.userid = &quot;</i>.<i class="va">$userid</i>.</div><div class="ln" style="top:204px">            <i class="st">&quot;           AND accounts.paymentmethodid = -1 &quot;</i>.</div><div class="ln" style="top:217px">            <i class="st">&quot;       UNION ALL &quot;</i>.</div><div class="ln" style="top:230px">            <i class="st">&quot;           SELECT SUM(transactions.amount) AS amount &quot;</i>.</div><div class="ln" style="top:243px">            <i class="st">&quot;           FROM transactions, orders, accounts &quot;</i>.</div><div class="ln" style="top:256px">            <i class="st">&quot;           WHERE orders.id = transactions.orderid &quot;</i>.</div><div class="ln" style="top:269px">            <i class="st">&quot;           AND accounts.id = transactions.accountid &quot;</i>.</div><div class="ln" style="top:282px">            <i class="st">&quot;           AND orders.canceled IS NULL &quot;</i>.</div><div class="ln" style="top:295px">            <i class="st">&quot;           AND accounts.currencyid = &quot;</i>.<i class="va">$pairdata</i>[<i class="st">&quot;currencyid&quot;</i>].</div><div class="ln" style="top:308px">            <i class="st">&quot;           AND accounts.userid = &quot;</i>.<i class="va">$userid</i>.</div><div class="ln" style="top:321px">            <i class="st">&quot;           AND accounts.paymentmethodid = -1&quot;</i>.</div><div class="ln" style="top:334px">            <i class="st">&quot;           AND transactions.amount &lt; 0&quot;</i>.</div><div class="ln" style="top:347px">            <i class="st">&quot;       ) amount&quot;</i>;</div><div class="ln" style="top:360px">            <i class="kw">if</i> (<i class="op">!</i><i class="va">$rs</i><i class="op">=</i><i class="va">$db</i><i class="op">-&gt;</i>query(<i class="va">$sql</i>))</div><div class="ln" style="top:373px">                badEnd(<i class="st">&quot;500&quot;</i>, <i class="kw">array</i>(<i class="st">&quot;msg&quot;</i><i class="op">=&gt;</i><i class="va">$db</i><i class="op">-&gt;</i>error));</div><div class="ln" style="top:386px"></div><div class="ln" style="top:399px">            <i class="va">$roworders</i> <i class="op">=</i> <i class="va">$rs</i><i class="op">-&gt;</i>fetch_assoc();</div><div class="ln" style="top:412px"></div><div class="ln" style="top:425px">            <i class="cm">//Si el saldo es menor a cantidad*precio retornamos error 403-saldo insuficiente</i></div><div class="ln" style="top:438px">            <i class="kw">if</i>((<i class="va">$row</i>[<i class="st">&quot;qty&quot;</i>] <i class="op">-</i> <i class="va">$roworders</i>[<i class="st">&quot;qty&quot;</i>]) <i class="op">&lt;</i> (<i class="va">$price</i> <i class="op">*</i> <i class="va">$qty</i>)){</div><div class="ln" style="top:451px">                badEnd(<i class="st">&#x27;403&#x27;</i>, <i class="kw">array</i>(<i class="st">&#x27;msg&#x27;</i><i class="op">=&gt;</i><i class="st">&#x27;Saldo insuficiente&#x27;</i>));</div><div class="ln" style="top:464px">            }</div><div class="ln" style="top:477px"></div><div class="ln" style="top:490px">        }<i class="kw">else</i>{</div><div class="ln" style="top:503px">            badEnd(<i class="st">&#x27;500&#x27;</i>,<i class="kw">array</i>(<i class="st">&#x27;msg&#x27;</i><i class="op">=&gt;</i><i class="st">&#x27;El parametro side debe ser 1(venta) o 2(compra)&#x27;</i>));</div><div class="ln" style="top:516px">        }</div><div class="ln" style="top:529px">    }</div><div class="ln" style="top:542px">?&gt;</div></div></div>
 <div id="cursor" style="top:542px"></div>
 <div id="vscroll"><div id="sup"></div><div id="thumb"></div><div id="sdn"></div></div>
</div>

</body></html>
